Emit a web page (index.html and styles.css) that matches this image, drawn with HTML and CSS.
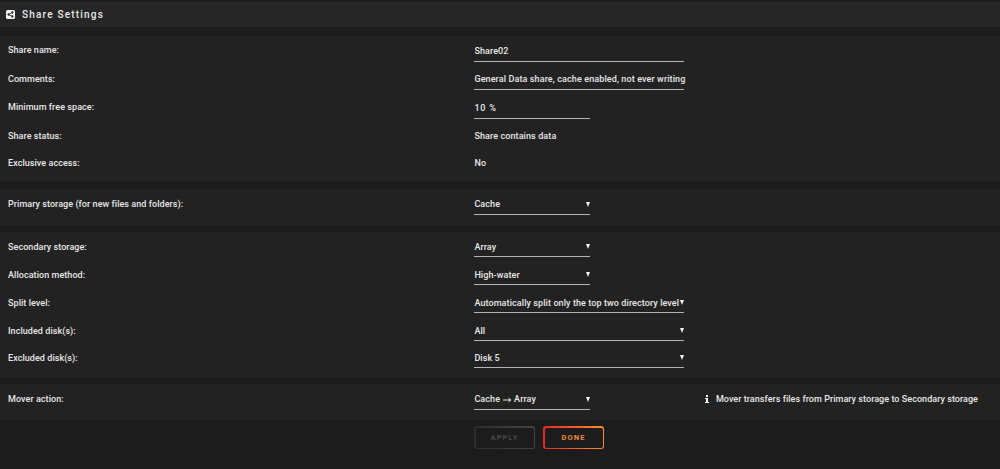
FILE: index.html
```html
<!DOCTYPE html>
<html lang="en">
<head>
    <meta charset="UTF-8">
    <title>Share Settings</title>
    <link rel="stylesheet" href="styles.css">
</head>
<body>
<div class="title">
    <svg class="title-icon" viewBox="0 0 18 18">
        <rect width="18" height="18" rx="3" fill="#f2f2f2"/>
        <path d="M13 5L5 9l8 4" fill="none" stroke="#262626" stroke-width="1.6"/>
        <circle cx="12.7" cy="5" r="2.3" fill="#262626"/>
        <circle cx="5.2" cy="9" r="2.3" fill="#262626"/>
        <circle cx="12.7" cy="13" r="2.3" fill="#262626"/>
    </svg>
    <span class="title-text">Share Settings</span>
</div>
<div class="panel panel-share">
    <div class="row"><div class="label">Share name:</div><div class="field">Share02</div></div>
    <div class="row"><div class="label">Comments:</div><div class="field comments">General Data share, cache enabled, not ever writing</div></div>
    <div class="row"><div class="label">Minimum free space:</div><div class="field narrow number">10 %</div></div>
    <div class="row"><div class="label">Share status:</div><div class="value">Share contains data</div></div>
    <div class="row"><div class="label">Exclusive access:</div><div class="value">No</div></div>
</div>
<div class="panel panel-single">
    <div class="row"><div class="label">Primary storage (for new files and folders):</div><div class="field select narrow">Cache</div></div>
</div>
<div class="panel panel-storage">
    <div class="row"><div class="label">Secondary storage:</div><div class="field select narrow">Array</div></div>
    <div class="row"><div class="label">Allocation method:</div><div class="field select narrow">High-water</div></div>
    <div class="row"><div class="label">Split level:</div><div class="field select">Automatically split only the top two directory level</div></div>
    <div class="row"><div class="label">Included disk(s):</div><div class="field select">All</div></div>
    <div class="row"><div class="label">Excluded disk(s):</div><div class="field select">Disk 5</div></div>
</div>
<div class="panel panel-single">
    <div class="row">
        <div class="label">Mover action:</div>
        <div class="field select narrow">Cache <svg class="arrow" viewBox="0 0 9 6"><path d="M0 3h8M5.5 1.2L8 3 5.5 4.8" fill="none" stroke="#e8e8e8"/></svg> Array</div>
        <div class="hint">
            <svg class="info" viewBox="0 0 4 8"><path d="M1 0h2v2H1zM0 3h3v4h1v1H0V7h1V4H0z" fill="#f2f2f2"/></svg>
            <span>Mover transfers files from Primary storage to Secondary storage</span>
        </div>
    </div>
</div>
<div class="buttons">
    <div class="button apply"><span>APPLY</span></div>
    <div class="button done"><span>DONE</span></div>
</div>
</body>
</html>
```
FILE: styles.css
```css
body {
    margin: 0;
    padding-top: 2px;
    background: #1c1c1c;
    color: #e8e8e8;
    font-family: Roboto, sans-serif;
    font-size: 9px;
    font-weight: 500;
    letter-spacing: 0.06px;
    overflow: hidden;
}

.title {
    display: flex;
    align-items: center;
    height: 25px;
    margin-bottom: 9px;
    padding-left: 6px;
    background: #262626;
}

.title-icon {
    width: 9px;
    height: 9px;
    margin-right: 7px;
}

.title-text {
    font-size: 10px;
    letter-spacing: 1.2px;
}

.panel {
    box-sizing: border-box;
    margin-bottom: 7px;
    padding-left: 8px;
    background: #222222;
}

.panel-share {
    display: grid;
    grid-template-rows: 29px 28px 29px 27px 27px;
    height: 146px;
}

.panel-single {
    height: 36px;
    padding-top: 1px;
}

.panel-storage {
    display: grid;
    grid-template-rows: 28px 28px 28px 27px 27px;
    height: 145px;
    padding-top: 1px;
}

.row {
    display: flex;
    align-items: flex-start;
    padding-top: 4px;
}

.label {
    width: 466.4px;
    line-height: 20px;
}

.field {
    box-sizing: border-box;
    width: 210px;
    height: 22px;
    border-bottom: 1px solid #b4b4b4;
    line-height: 22px;
    letter-spacing: 0.09px;
    white-space: nowrap;
}

.comments {
    height: 21px;
    line-height: 21px;
    letter-spacing: 0.11px;
}

.number {
    letter-spacing: 0.8px;
}

.narrow {
    width: 116px;
}

.value {
    line-height: 21px;
    letter-spacing: 0.1px;
}

.select {
    display: flex;
    align-items: center;
    height: 21px;
    line-height: 20px;
}

.panel-storage .select {
    height: 20px;
}

.select::after {
    content: "";
    margin-left: auto;
    border: 2.5px solid transparent;
    border-top: 5px solid #f2f2f2;
    border-bottom: 0;
}

.arrow {
    width: 9px;
    height: 6px;
    margin: 1px 2px 0 3px;
}

.hint {
    display: flex;
    align-items: center;
    margin-left: 114.5px;
    line-height: 20px;
    letter-spacing: 0.05px;
}

.info {
    width: 4px;
    height: 8px;
    margin-right: 7px;
}

.buttons {
    display: flex;
    gap: 8px;
    margin-top: -1px;
    padding-left: 474px;
}

.button {
    box-sizing: border-box;
    width: 61px;
    height: 23px;
    padding: 1.5px;
    border-radius: 3px;
    font-size: 7.5px;
    font-weight: bold;
    letter-spacing: 1.1px;
}

.button span {
    display: block;
    height: 20px;
    border-radius: 2px;
    background: #1c1c1c;
    line-height: 20px;
    text-align: center;
}

.apply {
    background: linear-gradient(90deg, #2c2c2c, #444444);
    color: #484848;
}

.done {
    background: linear-gradient(90deg, #e22828, #ff8c2f);
    color: #f08a35;
}
```
